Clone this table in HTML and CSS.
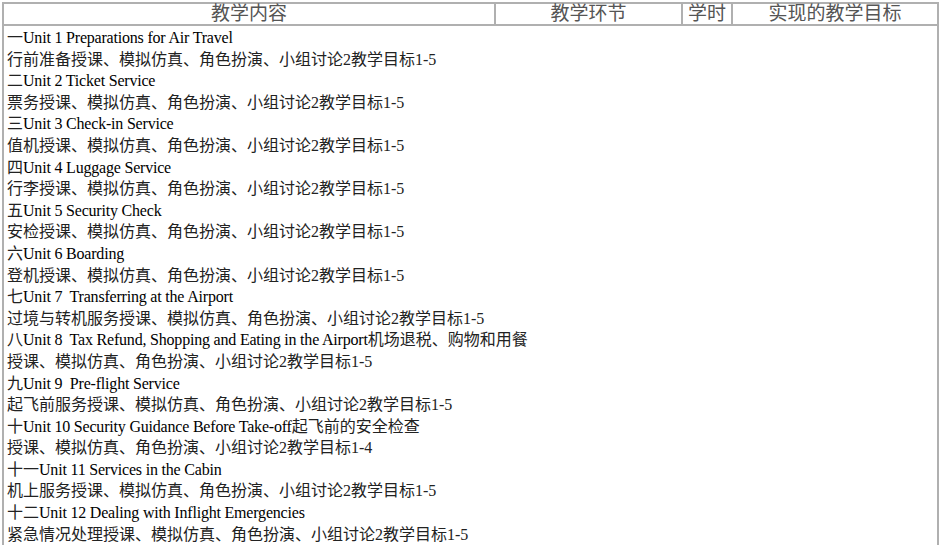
FILE: index.html
```html
<!DOCTYPE html>
<html lang="zh-CN">

<head>
    <meta charset="UTF-8">
    <title>教学内容</title>
    <link rel="stylesheet" href="styles.css">
</head>

<body>
    <table class="plan">
        <colgroup>
            <col class="colContent">
            <col class="colStep">
            <col class="colHours">
            <col class="colGoal">
        </colgroup>
        <thead>
            <tr>
                <th>教学内容</th>
                <th>教学环节</th>
                <th>学时</th>
                <th>实现的教学目标</th>
            </tr>
        </thead>
        <tbody>
            <tr>
                <td colspan="4" class="units">
                    <div>一<span class="en">Unit 1 Preparations for Air Travel</span></div>
                    <div>行前准备授课、模拟仿真、角色扮演、小组讨论2教学目标1-5</div>
                    <div>二<span class="en">Unit 2 Ticket Service</span></div>
                    <div>票务授课、模拟仿真、角色扮演、小组讨论2教学目标1-5</div>
                    <div>三<span class="en">Unit 3 Check-in Service</span></div>
                    <div>值机授课、模拟仿真、角色扮演、小组讨论2教学目标1-5</div>
                    <div>四<span class="en">Unit 4 Luggage Service</span></div>
                    <div>行李授课、模拟仿真、角色扮演、小组讨论2教学目标1-5</div>
                    <div>五<span class="en">Unit 5 Security Check</span></div>
                    <div>安检授课、模拟仿真、角色扮演、小组讨论2教学目标1-5</div>
                    <div>六<span class="en">Unit 6 Boarding</span></div>
                    <div>登机授课、模拟仿真、角色扮演、小组讨论2教学目标1-5</div>
                    <div>七<span class="en">Unit 7&nbsp; Transferring at the Airport</span></div>
                    <div>过境与转机服务授课、模拟仿真、角色扮演、小组讨论2教学目标1-5</div>
                    <div>八<span class="en">Unit 8&nbsp; Tax Refund, Shopping and Eating in the Airport</span>机场退税、购物和用餐</div>
                    <div>授课、模拟仿真、角色扮演、小组讨论2教学目标1-5</div>
                    <div>九<span class="en">Unit 9&nbsp; Pre-flight Service</span></div>
                    <div>起飞前服务授课、模拟仿真、角色扮演、小组讨论2教学目标1-5</div>
                    <div>十<span class="en">Unit 10 Security Guidance Before Take-off</span>起飞前的安全检查</div>
                    <div>授课、模拟仿真、角色扮演、小组讨论2教学目标1-4</div>
                    <div>十一<span class="en">Unit 11 Services in the Cabin</span></div>
                    <div>机上服务授课、模拟仿真、角色扮演、小组讨论2教学目标1-5</div>
                    <div>十二<span class="en">Unit 12 Dealing with Inflight Emergencies</span></div>
                    <div>紧急情况处理授课、模拟仿真、角色扮演、小组讨论2教学目标1-5</div>
                </td>
            </tr>
        </tbody>
    </table>
</body>

</html>
```

FILE: styles.css
```css
html,
body {
    margin: 0;
    height: 100%;
    overflow: hidden;
    background: #ffffff;
}

body {
    padding: 2px 3px 0 2px;
    box-sizing: border-box;
    font-family: "Liberation Serif", "Noto Sans CJK SC", serif;
    color: #222;
}

.plan {
    width: 935px;
    border-collapse: collapse;
    table-layout: fixed;
}

.colContent {
    width: 492px;
}

.colStep {
    width: 187px;
}

.colHours {
    width: 50px;
}

.colGoal {
    width: 206px;
}

th,
td {
    border: 2px solid #b0b0b0;
    padding: 0;
}

th {
    height: 20px;
    font-weight: normal;
    font-size: 19px;
    line-height: 20px;
    color: #555;
    text-align: center;
}

.units {
    padding: 1px 3px 0;
    border-bottom: none;
    font-size: 16px;
    line-height: 21.6px;
    vertical-align: top;
}

.units div {
    white-space: nowrap;
}

.en {
    color: #000;
    letter-spacing: -0.2px;
}
```
